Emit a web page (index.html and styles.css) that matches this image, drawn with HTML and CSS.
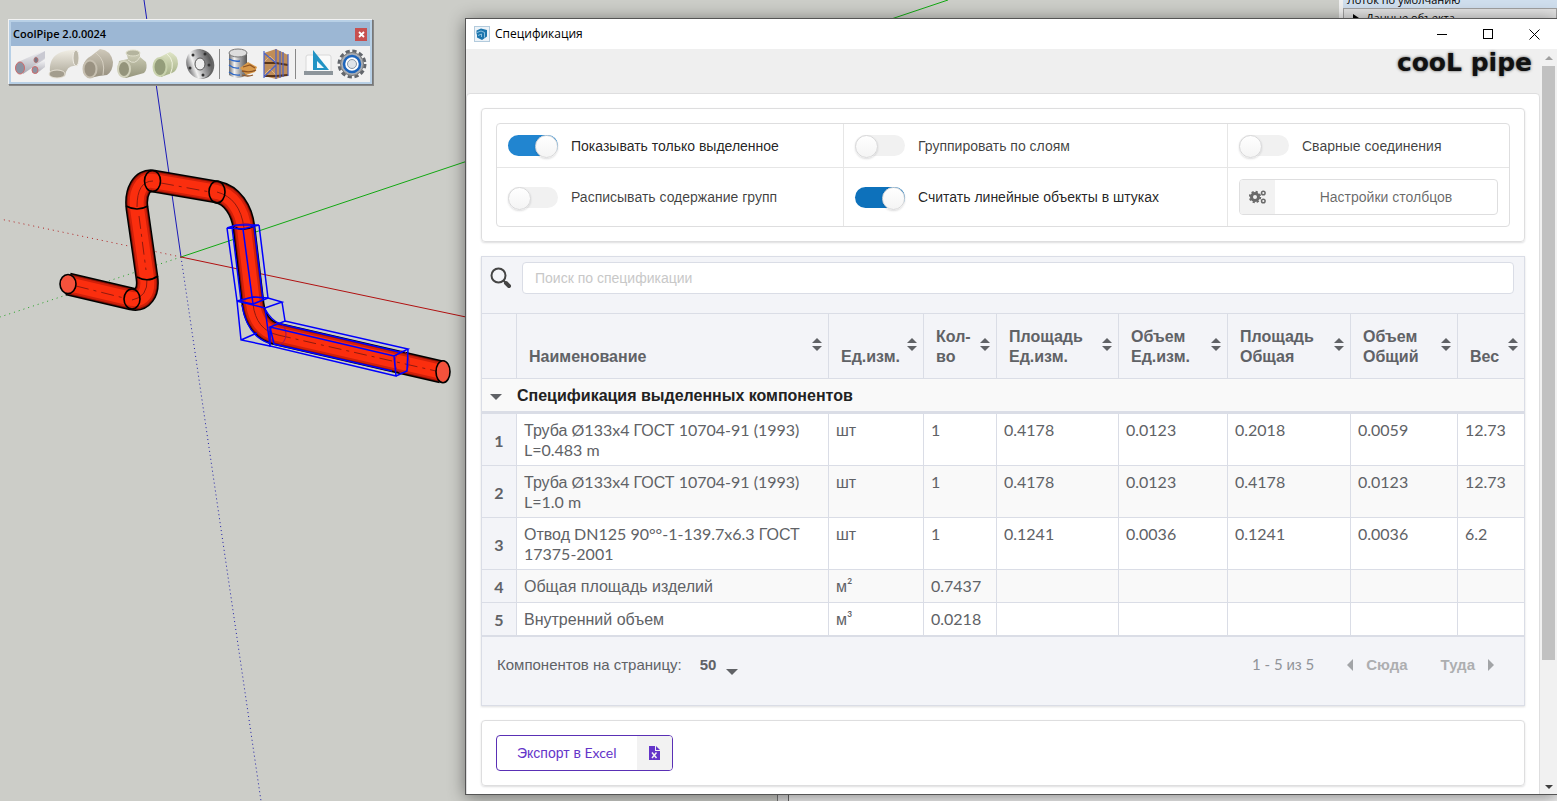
FILE: index.html
```html
<!DOCTYPE html>
<html lang="ru">
<head>
<meta charset="utf-8">
<title>Спецификация</title>
<link rel="stylesheet" href="styles.css">
</head>
<body>
<div class="desktop">
  <svg class="scene" width="1557" height="801" viewBox="0 0 1557 801" fill="none" aria-hidden="true">
    <g stroke-width="1">
      <path d="M144 0L181 257" stroke="#1a1ab8"/>
      <path d="M181 257L261 801" stroke="#2020a8" stroke-dasharray="1 3"/>
      <path d="M181 257L948 0" stroke="#12a812"/>
      <path d="M181 257L0 317" stroke="#20a020" stroke-dasharray="1 4"/>
      <path d="M181 257L466 317" stroke="#b01010"/>
      <path d="M181 257L0 219" stroke="#b02020" stroke-dasharray="1 4"/>
    </g>
    <g stroke-linejoin="round">
      <path d="M68 284L132 299C142 301 149 293 147 278L137 208C135 192 142 179 153 181L217 192C232 195 242 210 244 228L253 304C255 319 263 331 277 334L442 372" stroke="#000" stroke-width="23"/>
      <path d="M68 284L132 299C142 301 149 293 147 278L137 208C135 192 142 179 153 181L217 192C232 195 242 210 244 228L253 304C255 319 263 331 277 334L442 372" stroke="#8c1206" stroke-width="20"/>
      <path d="M68 284L132 299C142 301 149 293 147 278L137 208C135 192 142 179 153 181L217 192C232 195 242 210 244 228L253 304C255 319 263 331 277 334L442 372" stroke="#d0200a" stroke-width="18"/>
      <path d="M68 284L132 299C142 301 149 293 147 278L137 208C135 192 142 179 153 181L217 192C232 195 242 210 244 228L253 304C255 319 263 331 277 334L442 372" stroke="#fb2e0e" stroke-width="14"/>
    </g>
    <g stroke="#8e1a0e" stroke-width="1">
      <path d="M76 286L124 298M139 216L146 270M161 183L210 192M278 335L436 371" stroke-dasharray="13 5 3 5"/>
      <path d="M132 300Q148 297 147 279M137 207Q137 181 153 181M217 192Q240 198 244 228M253 304Q256 330 278 335"/>
    </g>
    <g stroke="#000" stroke-width="1.6">
      <ellipse cx="68" cy="284" rx="8" ry="9.500" fill="#f4523c"/>
      <ellipse cx="132" cy="299" rx="8" ry="10"/>
      <ellipse cx="152.500" cy="181" rx="8" ry="10.500"/>
      <ellipse cx="217" cy="192" rx="8" ry="11"/>
      <path d="M126 206Q137 212 148 206M137 277Q148 283 158 276M234 227Q244 232 254 226"/>
      <ellipse cx="443" cy="371.700" rx="7" ry="11" fill="#f4523c"/>
    </g>
    <g stroke="#9a1060">
      <ellipse cx="278" cy="334" rx="8" ry="11"/><ellipse cx="402" cy="362" rx="7" ry="11"/>
      <path d="M234 228Q244 220 254 226M242 301Q253 294 263 299"/>
    </g>
    <g stroke="#00f" stroke-width="1.500">
      <path d="M227 228L236 225L259 225L243 229ZM227 228L237 301M259 225L268 298M243 229L253 304M254 226L263 300M232 227L241 301M237 301L253 304L268 298"/>
      <path d="M237 301L265 308L282 302L268 298L253 297ZM237 301L241 340L270 346L265 308M282 302L285 321M241 340L257 333M242 305C245 324 254 338 269 343M265 309Q271 320 280 324"/>
      <path d="M270 327L394 356L408 349L285 321ZM270 327V346L396 376L394 356M396 376L407 371L408 349M280 324L400 352M270 327L274 344L392 371"/>
    </g>
  </svg>

  <aside class="tray">
    <div class="tray-title">Лоток по умолчанию</div>
    <div class="tray-row"><span class="tray-arrow"></span>Данные объекта</div>
  </aside>
  <div class="tray-foot"></div>

  <section class="tools" aria-label="CoolPipe">
    <header class="tools-head"><span>CoolPipe 2.0.0024</span><button class="tools-close" aria-label="Закрыть"><svg width="7" height="7" viewBox="0 0 7 7"><path d="M1 1L6 6M6 1L1 6" stroke="#fff" stroke-width="1.800"/></svg></button></header>
    <div class="tools-row">
      <svg width="0" height="0" class="defs" aria-hidden="true"><defs>
        <linearGradient id="pvc" x2="0" y2="1"><stop stop-color="#f4f4f6"/><stop offset="1" stop-color="#a9a9b2"/></linearGradient>
        <linearGradient id="cream" x2="0" y2="1"><stop stop-color="#f0ede4"/><stop offset="1" stop-color="#aaa595"/></linearGradient>
        <linearGradient id="tan" x2="0" y2="1"><stop stop-color="#cfc9ba"/><stop offset="1" stop-color="#958e7d"/></linearGradient>
        <linearGradient id="olive" x2="0" y2="1"><stop stop-color="#d6d6c0"/><stop offset="1" stop-color="#95957c"/></linearGradient>
        <linearGradient id="green" x2="0" y2="1"><stop stop-color="#dfe5c6"/><stop offset="1" stop-color="#a2ad83"/></linearGradient>
        <linearGradient id="steel"><stop stop-color="#6c6c6e"/><stop offset=".3" stop-color="#f2f2f2"/><stop offset=".6" stop-color="#a4a4a6"/><stop offset="1" stop-color="#555"/></linearGradient>
      </defs></svg>
      <button class="tool" aria-label="Труба"><svg viewBox="0 0 32 32"><path d="M4 14L31 2V11L9 26Z" fill="url(#pvc)"/><path d="M20 9L31 3V10L24 15Z" fill="#c9c9d2"/><path d="M19 18L31 12V19L22 26Z" fill="url(#pvc)"/><ellipse cx="6" cy="20" rx="4.500" ry="6" fill="#8d92a0" stroke="#cf6a6a"/><ellipse cx="21" cy="22" rx="3" ry="3.500" fill="#8d92a0" stroke="#cf6a6a"/><ellipse cx="22" cy="12" rx="2" ry="2.500" fill="#777785" stroke="#b07070"/></svg></button>
      <button class="tool" aria-label="Отвод"><svg viewBox="0 0 32 32"><path d="M2 24C1 10 8 2 28 2L31 8L29 18Q19 16 17 28Q10 31 3 27Z" fill="url(#cream)"/><ellipse cx="28" cy="10" rx="3" ry="8" fill="#bdb8a9" stroke="#f2efe8"/><ellipse cx="9" cy="26" rx="8" ry="4" fill="#a39d8e" stroke="#e6e1d5"/></svg></button>
      <button class="tool" aria-label="Переход"><svg viewBox="0 0 32 32"><path d="M9 8L18 1Q29 2 31 14Q31 23 25 27L17 28L8 30Q1 26 1 18Q3 11 9 8Z" fill="url(#tan)"/><path d="M14 5Q24 12 21 27" stroke="#d6d0c2" fill="none"/><ellipse cx="8" cy="21" rx="6.500" ry="8.500" fill="#9a9282" stroke="#c6bfb0" stroke-width="2"/></svg></button>
      <button class="tool" aria-label="Тройник"><svg viewBox="0 0 32 32"><path d="M10 4Q17 0 24 4V9L30 14Q32 21 28 25L10 30Q2 28 2 20L3 13L12 11Z" fill="url(#olive)"/><ellipse cx="17" cy="5" rx="7" ry="3" fill="#b4b49e" stroke="#deddc9"/><ellipse cx="8" cy="21" rx="6" ry="8" fill="#94947b" stroke="#d2d2bc" stroke-width="2"/><path d="M12 12Q19 18 24 9" stroke="#e2e1d0" fill="none"/></svg></button>
      <button class="tool" aria-label="Муфта"><svg viewBox="0 0 32 32"><path d="M10 9L20 4Q28 7 28 16Q27 23 22 25L11 29Z" fill="url(#green)"/><path d="M17 6Q26 13 20 27" stroke="#f0f3de" fill="none"/><ellipse cx="10" cy="19" rx="6.500" ry="9" fill="#949d7a" stroke="#c9d2ad" stroke-width="2"/></svg></button>
      <button class="tool" aria-label="Фланец"><svg viewBox="0 0 32 32"><ellipse cx="17" cy="16" rx="13" ry="15" transform="rotate(-20 17 16)" fill="#666"/><ellipse cx="15" cy="16" rx="12.500" ry="15" transform="rotate(-20 15 16)" fill="url(#steel)"/><ellipse cx="16" cy="16" rx="5" ry="6" fill="#eee" stroke="#555"/><g fill="#333"><circle cx="9" cy="7" r="1.500"/><circle cx="21" cy="6" r="1.500"/><circle cx="25" cy="17" r="1.500"/><circle cx="19" cy="27" r="1.500"/><circle cx="6" cy="20" r="1.500"/></g></svg></button>
      <span class="tool-sep"></span>
      <button class="tool" aria-label="База данных"><svg viewBox="0 0 32 32"><path d="M3 5V27Q11 33 21 27V5Z" fill="url(#steel)"/><ellipse cx="12" cy="5" rx="9" ry="4" fill="#ddd" stroke="#777"/><path d="M3 11Q8 14 14 13M3 17Q8 21 13 20M3 24Q8 28 14 27" stroke="#2c67c8" stroke-width="1.300" fill="none"/><path d="M14 20L22 14L31 19L29 24L20 27Z" fill="#d99a4b"/><path d="M17 19L24 17L29 20M16 23Q24 25 30 22M16 27Q22 29 27 27" stroke="#8e5424" stroke-width="1.300" fill="none"/></svg></button>
      <button class="tool" aria-label="Склад"><svg viewBox="0 0 32 32"><path d="M4 5L16 1L28 7V27L16 31L4 28Z" fill="#c08d58"/><path d="M4 15H16L28 17M4 28H16L28 27" stroke="#5a3518" stroke-width="2" fill="none"/><path d="M4 14L10 8L16 14M4 27L10 21L16 27" stroke="#dfb583" fill="none"/><path d="M4 3V30M16 1V31M28 6V28M23 4V29M20 3V30M4 5L16 15M4 29L16 17" stroke="#4a62c8" stroke-width="1.200" fill="none"/></svg></button>
      <span class="tool-sep"></span>
      <button class="tool" aria-label="Чертёж"><svg viewBox="0 0 32 32"><rect x="4" y="7" width="25" height="18" rx="2" fill="#fafafa" stroke="#d8d8d8"/><path d="M2 23H31V27H2Z" fill="#8d959b"/><path d="M11 2L27 22H11Z" fill="#2193c4"/><path d="M15 13L22 20H15Z" fill="#eef8fc"/></svg></button>
      <button class="tool" aria-label="Настройки"><svg viewBox="0 0 32 32"><circle cx="16" cy="16" r="13" fill="none" stroke="#62666c" stroke-width="3" stroke-dasharray="4.200 2.600"/><circle cx="16" cy="16" r="11.500" fill="#a9adb3" stroke="#777"/><circle cx="16" cy="16" r="8" fill="#fff" stroke="#1d65bc" stroke-width="2.500"/><circle cx="16" cy="16" r="4.500" fill="#dfe4e9" stroke="#8b98a5"/></svg></button>
    </div>
  </section>

  <main class="window">
    <header class="titlebar">
      <svg class="app-icon" width="16" height="16" viewBox="0 0 16 16"><rect x=".5" y=".5" width="15" height="15" fill="#edf3f8" stroke="#b3cbdd"/><path d="M2.500 4.500L7 2.500L13 4V10.500L8 14L3 11.500V9L2.500 7.500Z" fill="#1b75ad"/><path d="M3 6.500L7 5L10.500 6.500V11.500M4 9.500L7.500 8V11" stroke="#a8d3ec" stroke-width=".8" fill="none"/></svg>
      <h1>Спецификация</h1>
      <div class="win-buttons">
        <button aria-label="Свернуть"><svg width="10" height="10" viewBox="0 0 10 10"><path d="M0 5.500H10" stroke="#000"/></svg></button>
        <button aria-label="Развернуть"><svg width="10" height="10" viewBox="0 0 10 10"><rect x=".5" y=".5" width="9" height="9" fill="none" stroke="#000"/></svg></button>
        <button aria-label="Закрыть"><svg width="11" height="11" viewBox="0 0 11 11"><path d="M.5 .5L10.500 10.500M10.500 .5L.5 10.500" stroke="#000"/></svg></button>
      </div>
    </header>
    <div class="body">
      <div class="page">
        <div class="brand"><span>cooL pipe</span></div>
        <div class="sheet">
          <section class="segment">
            <div class="options">
              <label class="option"><input type="checkbox" class="toggle" checked>Показывать только выделенное</label>
              <label class="option off"><input type="checkbox" class="toggle">Группировать по слоям</label>
              <label class="option off"><input type="checkbox" class="toggle">Сварные соединения</label>
              <label class="option off"><input type="checkbox" class="toggle">Расписывать содержание групп</label>
              <label class="option"><input type="checkbox" class="toggle strong" checked>Считать линейные объекты в штуках</label>
              <div class="option"><button class="settings"><span class="settings-icon"><svg width="18" height="14" viewBox="0 0 18 14"><circle cx="6" cy="7" r="3.500" fill="none" stroke="#6a6a6a" stroke-width="3"/><circle cx="6" cy="7" r="5.300" fill="none" stroke="#6a6a6a" stroke-width="1.800" stroke-dasharray="2.200 1.960"/><circle cx="14.300" cy="3" r="1.800" fill="none" stroke="#6a6a6a" stroke-width="1.500"/><circle cx="14.300" cy="11" r="1.800" fill="none" stroke="#6a6a6a" stroke-width="1.500"/></svg></span><span class="settings-text">Настройки столбцов</span></button></div>
            </div>
          </section>

          <section class="grid">
            <div class="search">
              <label for="q" aria-label="Поиск"><svg width="22" height="22" viewBox="0 0 22 22"><circle cx="8.500" cy="8.500" r="7" fill="none" stroke="#444" stroke-width="2"/><path d="M13.500 13.500L16 16" stroke="#444" stroke-width="2"/><path d="M16 16L19 19" stroke="#444" stroke-width="4" stroke-linecap="round"/></svg></label>
              <input id="q" type="text" placeholder="Поиск по спецификации">
            </div>
            <table>
              <colgroup><col class="c-num"><col><col class="c-unit"><col class="c-qty"><col class="c-area"><col class="c-vol"><col class="c-area2"><col class="c-vol2"><col class="c-mass"></colgroup>
              <thead>
                <tr><th></th>
                <th>Наименование<i class="sort"></i></th>
                <th>Ед.изм.<i class="sort"></i></th>
                <th>Кол-<br>во<i class="sort"></i></th>
                <th>Площадь<br>Ед.изм.<i class="sort"></i></th>
                <th>Объем<br>Ед.изм.<i class="sort"></i></th>
                <th>Площадь<br>Общая<i class="sort"></i></th>
                <th>Объем<br>Общий<i class="sort"></i></th>
                <th>Вес<i class="sort"></i></th></tr>
              </thead>
              <tbody>
                <tr class="group"><td><i class="caret"></i></td><td colspan="8">Спецификация выделенных компонентов</td></tr>
                <tr><th>1</th><td>Труба<span class="lat"> Ø133x4 </span>ГОСТ<span class="lat"> 10704-91 (1993) L=0.483 m</span></td><td>шт</td><td class="lat">1</td><td class="lat">0.4178</td><td class="lat">0.0123</td><td class="lat">0.2018</td><td class="lat">0.0059</td><td class="lat">12.73</td></tr>
                <tr><th>2</th><td>Труба<span class="lat"> Ø133x4 </span>ГОСТ<span class="lat"> 10704-91 (1993) L=1.0 m</span></td><td>шт</td><td class="lat">1</td><td class="lat">0.4178</td><td class="lat">0.0123</td><td class="lat">0.4178</td><td class="lat">0.0123</td><td class="lat">12.73</td></tr>
                <tr><th>3</th><td>Отвод<span class="lat"> DN125 90°°-1-139.7x6.3 </span>ГОСТ <span class="lat">17375-2001</span></td><td>шт</td><td class="lat">1</td><td class="lat">0.1241</td><td class="lat">0.0036</td><td class="lat">0.1241</td><td class="lat">0.0036</td><td class="lat">6.2</td></tr>
                <tr class="total"><th>4</th><td>Общая площадь изделий</td><td>м<span class="lat">²</span></td><td class="lat">0.7437</td><td></td><td></td><td></td><td></td><td></td></tr>
                <tr class="total"><th>5</th><td>Внутренний объем</td><td>м<span class="lat">³</span></td><td class="lat">0.0218</td><td></td><td></td><td></td><td></td><td></td></tr>
              </tbody>
            </table>
            <footer class="pager">
              <label for="size">Компонентов на страницу:</label>
              <span class="size"><select id="size"><option>50</option></select><i class="caret"></i></span>
              <span class="range"><span class="lat">1 - 5 </span>из<span class="lat"> 5</span></span>
              <button class="nav" disabled><i class="prev"></i>Сюда</button>
              <button class="nav" disabled>Туда<i class="next"></i></button>
            </footer>
          </section>

          <section class="segment">
            <button class="export"><span class="export-text">Экспорт в<span class="lat"> Excel</span></span><span class="export-icon"><svg width="11" height="14" viewBox="0 0 11 14"><path d="M0 0H6V5H11V14H0Z" fill="#6435c9"/><path d="M7 0L11 4H7Z" fill="#6435c9"/><path d="M3 6.500L7.500 12M7.500 6.500L3 12" stroke="#f2f2f2" stroke-width="1.500"/></svg></span></button>
          </section>
        </div>
      </div>
      <div class="scrollbar"><i class="sb-up"></i><div class="thumb"></div><i class="sb-down"></i></div>
    </div>
  </main>
</div>
</body>
</html>
```
FILE: styles.css
```css
* { box-sizing: border-box; }
body { margin: 0; font: 14px/20px "Liberation Sans", sans-serif; color: rgba(0,0,0,.87); }
button, input, select { font: inherit; color: inherit; margin: 0; }
button { padding: 0; border: 0; background: none; }
h1 { margin: 0; font: inherit; }
.lat { font-family: Lato, sans-serif; }
span.lat { line-height: 0; }

.desktop { position: relative; height: 100vh; overflow: hidden; background: #cccdc8; }
.scene { position: absolute; left: 0; top: 0; }

.tray { position: absolute; right: 0; top: 0; width: 218px; height: 30px; overflow: hidden; border-left: 4px solid #f0f0f0; background: #e2e2e2; font: 11px/14px "Open Sans", sans-serif; color: #000; }
.tray-title { height: 8px; padding-left: 4px; background: #cfdeed; line-height: 0; }
.tray-row { display: flex; align-items: center; gap: 7px; height: 20px; padding-left: 9px; border: 1px solid #a0a0a0; }
.tray-arrow { border: 4px solid transparent; border-left: 6px solid #000; border-right: 0; }
.tray-foot { position: absolute; left: 777px; right: 0; bottom: 0; height: 12px; border-left: 1px solid #777; background: linear-gradient(90deg, #ddd 10px, #666 10px, #666 11px, #f0f0f0 11px); }

.tools { position: absolute; left: 8px; top: 19px; width: 365px; padding: 2px; border: 1px solid #f2f2f2; border-right-color: #777; border-bottom-color: #777; background: #b8d0e6; box-shadow: 1px 1px 0 #888; }
.tools-head { display: flex; align-items: center; justify-content: space-between; height: 24px; padding: 0 3px 0 2px; background: #9cb7d4; font: 600 11px/20px "Open Sans", sans-serif; color: #000; }
.tools-close { display: flex; align-items: center; justify-content: center; width: 12px; height: 13px; background: #c75050; }
.tools-row { display: flex; align-items: center; height: 36px; padding: 0 2px; background: #f1f1f1; }
.defs { position: absolute; }
.tool { display: flex; flex: none; justify-content: center; width: 34px; }
.tool svg { width: 32px; height: 32px; }
.tool-sep { flex: none; width: 1px; height: 30px; margin: 0 5px 0 2px; background: #888; }

.window { position: absolute; left: 465px; right: 0; top: 18px; bottom: 6px; display: flex; flex-direction: column; border: 1px solid #555; border-right: 0; background: #fff; box-shadow: 0 2px 16px rgba(0,0,0,.45); }
.titlebar { display: flex; align-items: center; flex: none; height: 30px; padding-left: 8px; gap: 5px; font: 12px/20px "Open Sans", sans-serif; color: #000; }
.win-buttons { display: flex; margin-left: auto; }
.win-buttons button { display: flex; align-items: center; justify-content: center; width: 46px; height: 30px; }
.body { display: flex; flex: 1; min-height: 0; }
.page { flex: 1; min-width: 0; overflow: hidden; background: #efefef; }
.brand { height: 44px; padding: 2px 8px 0 0; text-align: right; font: bold 25px/24px "DejaVu Sans", sans-serif; color: #111; text-shadow: 0 0 3px #555; }
.sheet { display: grid; gap: 14px; padding: 14px; border: 1px solid #dededf; border-radius: 4px; background: #fff; }

.scrollbar { display: flex; flex-direction: column; flex: none; align-items: center; width: 17px; padding: 7px 0 5px; background: #f1f1f1; }
.sb-up { border: 4px solid transparent; border-bottom-color: #a0a0a0; border-top: 0; }
.sb-down { margin-top: auto; border: 4px solid transparent; border-top-color: #404040; border-bottom: 0; }
.thumb { width: 13px; height: 81%; margin-top: 6px; background: #c1c1c1; }

.segment { padding: 14px; border: 1px solid #dededf; border-radius: 4px; box-shadow: 0 1px 2px rgba(34,36,38,.15); }
.options { display: grid; grid-template-columns: 346fr 384fr 282fr; grid-template-rows: 44px 58px; border: 1px solid #dededf; border-radius: 4px; overflow: hidden; }
.option { display: flex; align-items: center; padding: 0 11px; border-left: 1px solid #e6e6e6; }
.option:nth-child(3n+1) { border-left: 0; }
.option:nth-child(-n+3) { border-bottom: 1px solid #e6e6e6; }
.off { color: rgba(0,0,0,.75); }
.toggle { appearance: none; flex: none; display: flex; width: 50px; height: 21px; margin-right: 13px; border-radius: 11px; background: #f1f1f1; }
.toggle::before { content: ""; width: 21px; height: 21px; border: 1px solid #d8d8d9; border-radius: 50%; background: linear-gradient(#fff, #f4f4f4); box-shadow: 0 1px 2px rgba(34,36,38,.15); }
.toggle:checked { justify-content: flex-end; background: #2185d0; }
.toggle.strong:checked { background: #0d71bb; }
.settings { display: flex; flex: 1; height: 36px; border: 1px solid #dededf; border-radius: 4px; overflow: hidden; color: rgba(0,0,0,.6); }
.settings-icon { display: flex; align-items: center; justify-content: center; width: 35px; height: 100%; background: #f2f2f2; }
.settings-text { flex: 1; line-height: 34px; }

.grid { border: 1px solid #dadde6; background: #f3f4f8; box-shadow: 0 1px 2px rgba(34,36,38,.15); color: #606266; }
.search { display: flex; align-items: flex-start; height: 56px; padding: 5px 10px 0 8px; }
.search label { width: 32px; padding-top: 5px; }
.search input { flex: 1; height: 32px; padding: 0 12px; border: 1px solid #dadde6; border-radius: 4px; background: #fff; outline: 0; }
.search input::placeholder { color: #c8c8c8; }
table { width: 100%; table-layout: fixed; border-collapse: separate; border-spacing: 0; font-size: 16px; border-bottom: 1px solid #dadde6; }
.c-num { width: 35px; } .c-unit { width: 95px; } .c-qty { width: 73px; } .c-area { width: 122px; } .c-vol { width: 109px; } .c-area2 { width: 123px; } .c-vol2 { width: 107px; } .c-mass { width: 66px; }
th, td { border-bottom: 1px solid #dadde6; border-right: 1px solid #dadde6; text-align: left; }
th:last-child, td:last-child { border-right: 0; }
td { padding: 6px 7px 4px; background: #fff; vertical-align: baseline; }
tbody tr:nth-child(odd) td { background: #f9f9f9; }
tbody tr { height: 52px; }
tbody .total { height: 33px; }
tbody .group { height: 35px; }
tbody th { padding: 2px 0 0; text-align: center; vertical-align: middle; font-family: Lato, sans-serif; }
thead th { position: relative; height: 66px; padding: 0 0 11px 12px; vertical-align: bottom; border-top: 1px solid #dadde6; }
.sort { position: absolute; right: 6px; top: 24px; width: 10px; height: 13px; }
.sort::before, .sort::after { content: ""; position: absolute; left: 0; border: 5px solid transparent; }
.sort::before { top: 0; border-top: 0; border-bottom-color: #606266; }
.sort::after { bottom: 0; border-bottom: 0; border-top-color: #606266; }
.caret { display: inline-block; border: 6px solid transparent; border-top-color: #606266; border-bottom: 0; }
tbody .group td { padding: 2px 0 0; border-right: 0; border-bottom-width: 3px; background: #fafafa; font-weight: bold; color: #222; vertical-align: middle; }
tbody .group td:first-child { padding: 0 0 0 8px; line-height: 16px; }
.pager { display: flex; align-items: center; height: 68px; padding: 0 30px 12px 15px; font-size: 15px; }
.size { position: relative; display: flex; margin-left: 16px; }
.size select { appearance: none; width: 40px; padding: 0 0 0 2px; border: 0; background: none; font-weight: bold; }
.size .caret { position: absolute; right: 0; bottom: 0; pointer-events: none; }
.range { margin-left: auto; color: #909399; }
.nav { display: flex; align-items: center; gap: 13px; margin-left: 33px; font-weight: bold; color: #adaeb0; }
.prev { border: 6px solid transparent; border-right-color: #a2a4a7; border-left: 0; }
.next { border: 6px solid transparent; border-left-color: #a2a4a7; border-right: 0; }

.export { display: flex; height: 36px; border: 1px solid #5a30b5; border-radius: 4px; overflow: hidden; color: #6435c9; }
.export-text { padding: 0 20px; line-height: 34px; }
.export-icon { display: flex; align-items: center; justify-content: center; width: 35px; height: 100%; background: #f2f2f2; }
```
